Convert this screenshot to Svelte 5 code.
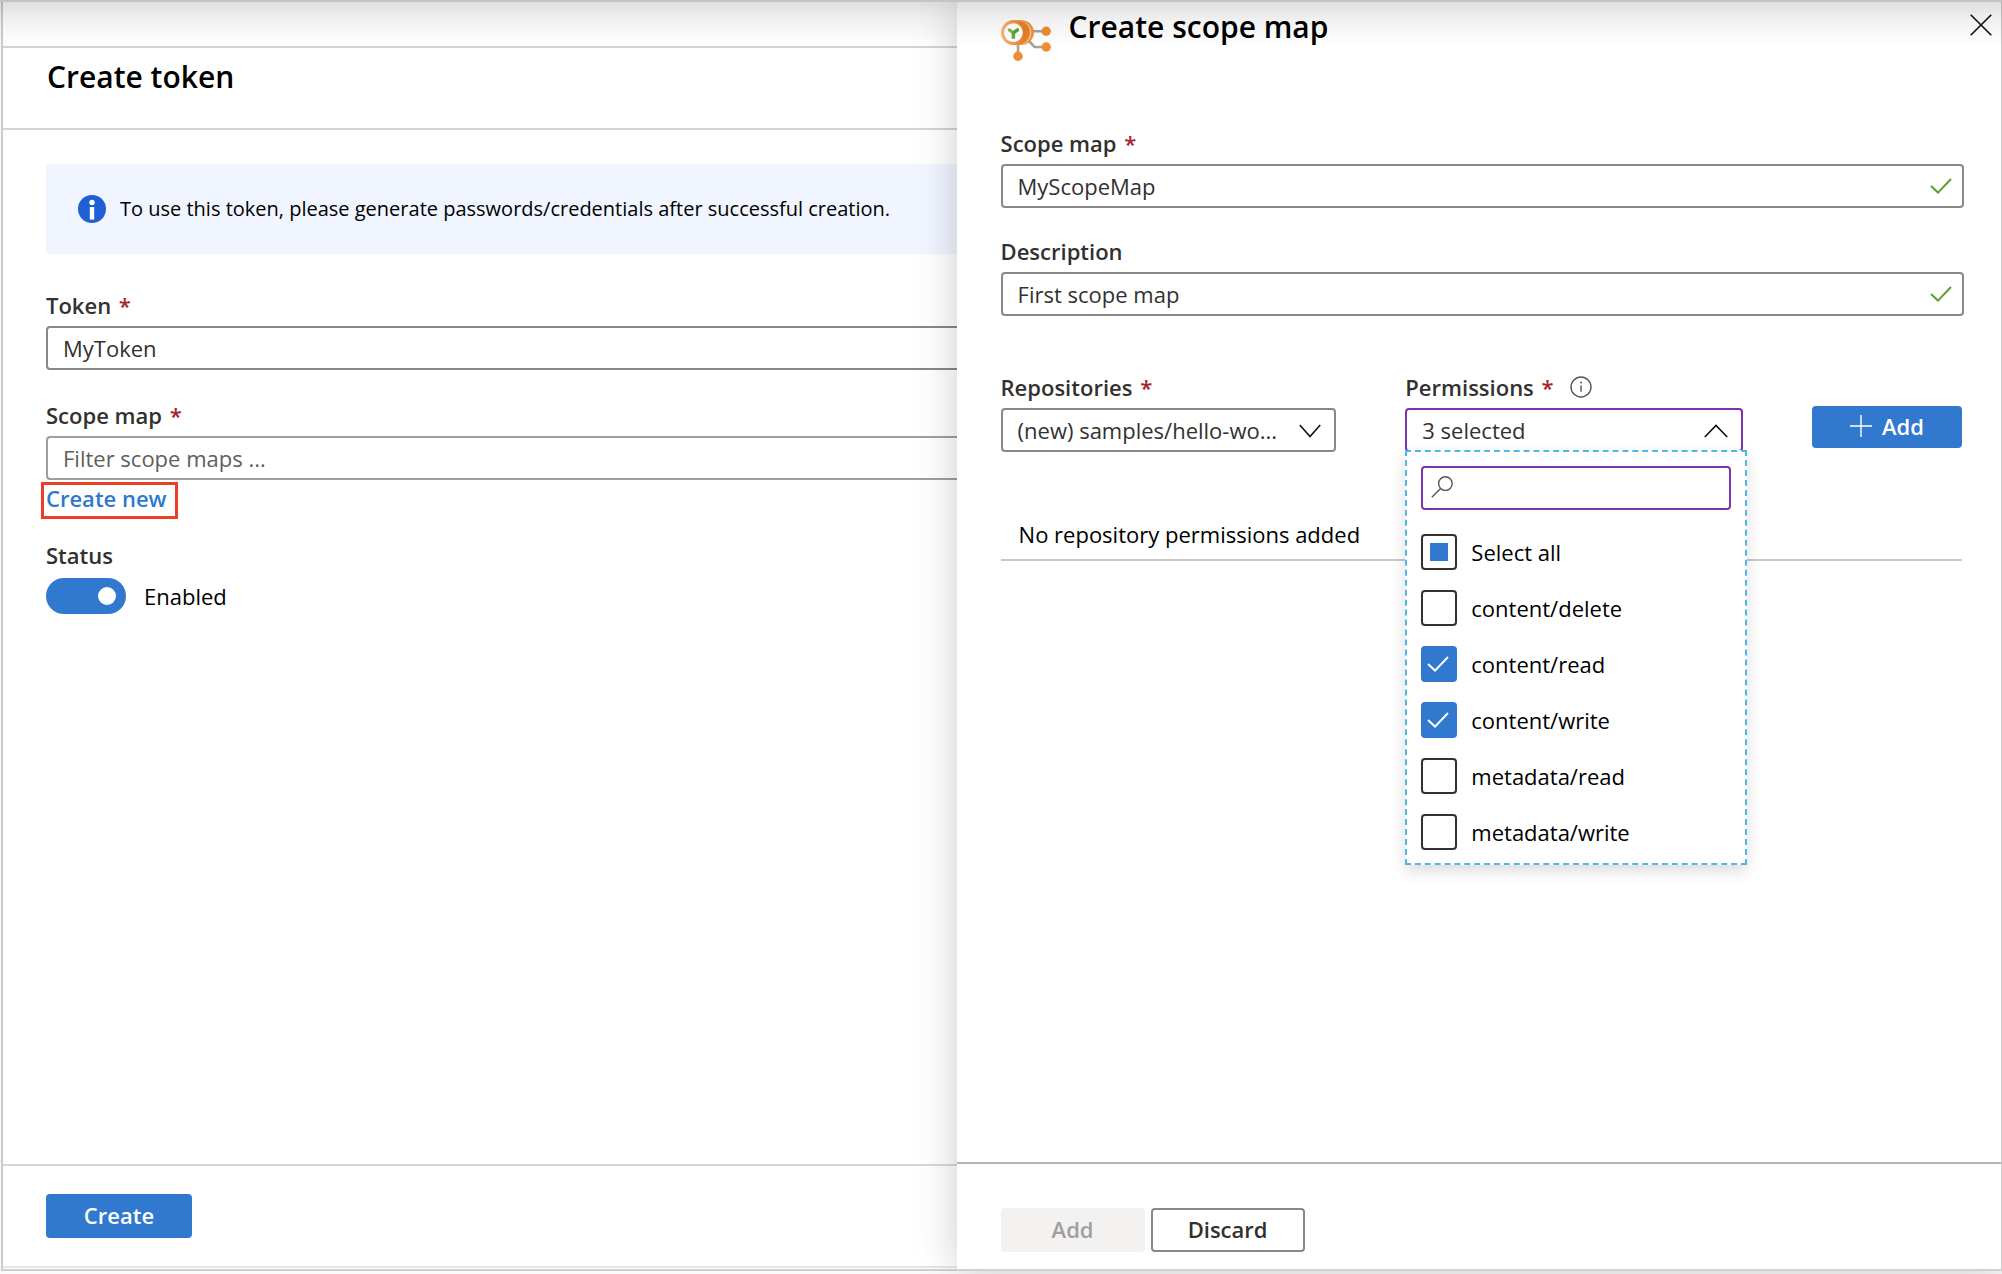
<script>
  let token = $state('MyToken');
  let scopeFilter = $state('');
  let enabled = $state(true);
  let mapName = $state('MyScopeMap');
  let description = $state('First scope map');
  let open = $state(true);
  let search = $state('');
  let permissions = $state([
    { name: 'content/delete', checked: false },
    { name: 'content/read', checked: true },
    { name: 'content/write', checked: true },
    { name: 'metadata/read', checked: false },
    { name: 'metadata/write', checked: false }
  ]);
  let allChecked = $state(false);
  let someChecked = $state(true);
  let summary = $state('3 selected');

  function refresh() {
    const count = permissions.filter((p) => p.checked).length;
    allChecked = count === permissions.length;
    someChecked = count > 0 && !allChecked;
    summary = `${count} selected`;
  }

  function toggleAll(event) {
    const value = event.currentTarget.checked;
    permissions.forEach((p) => (p.checked = value));
    refresh();
  }
</script>

<div class="page">
  <main class="blade token">
    <div class="strip"></div>
    <header class="token-header"><h1>Create token</h1></header>

    <div class="token-body">
      <div class="banner" role="note">
        <svg width="28" height="28" viewBox="0 0 28 28" aria-hidden="true">
          <circle cx="14" cy="14" r="14" fill="#1f5fd6" />
          <circle cx="14" cy="7.4" r="2.7" fill="#fff" />
          <rect x="11.8" y="12" width="4.4" height="12.6" fill="#fff" />
        </svg>
        <span>To use this token, please generate passwords/credentials after successful creation.</span>
      </div>

      <div class="field">
        <label for="token">Token <span class="req">*</span></label>
        <input id="token" class="box clipped" type="text" bind:value={token} />
      </div>

      <div class="field">
        <label for="scope-filter">Scope map <span class="req">*</span></label>
        <input id="scope-filter" class="box clipped light" type="text" placeholder="Filter scope maps ..." bind:value={scopeFilter} />
      </div>
      <a class="create-new" href="#create-scope-map">Create new</a>

      <div class="status">
        <span class="label" id="status-label">Status</span>
        <label class="switch">
          <input type="checkbox" role="switch" aria-labelledby="status-label" bind:checked={enabled} />
          <span>{enabled ? 'Enabled' : 'Disabled'}</span>
        </label>
      </div>
    </div>

    <footer class="token-footer"><button class="btn primary create" type="button">Create</button></footer>
  </main>

  <section class="blade scope" id="create-scope-map" aria-labelledby="scope-title">
    <header class="scope-header">
      <svg class="logo" width="50" height="42" viewBox="0 0 50 42" aria-hidden="true">
        <defs>
          <linearGradient id="ring" x1="0" y1="0" x2="1" y2="0">
            <stop offset="0" stop-color="#f8b878" />
            <stop offset="1" stop-color="#e87722" />
          </linearGradient>
        </defs>
        <path d="M32 11.2H43M28 21l5.5 6H43M17 24v9" fill="none" stroke="#a3a3a3" stroke-width="2.6" />
        <circle cx="20.5" cy="12.6" r="12.4" fill="#f0913a" />
        <circle cx="18" cy="12.6" r="12.2" fill="#fbd3a8" />
        <circle cx="16.6" cy="12.6" r="12.4" fill="#e9822c" />
        <circle cx="12.6" cy="12.6" r="12.6" fill="url(#ring)" />
        <circle cx="12.4" cy="12.6" r="9.4" fill="#fff" />
        <path d="M8.4 10L12.4 12.8L16.4 10" fill="none" stroke="#7fb84a" stroke-width="3.2" stroke-linecap="round" />
        <path d="M12.4 12v6.8" fill="none" stroke="#6aab38" stroke-width="3.6" />
        <path d="M13 12.4l3.4-2.4" fill="none" stroke="#5aa02c" stroke-width="3.2" stroke-linecap="round" />
        <circle cx="45.2" cy="11.2" r="4.7" fill="#f08c2e" />
        <circle cx="45.2" cy="27" r="4.7" fill="#f08c2e" />
        <circle cx="17" cy="36.2" r="4.7" fill="#f08c2e" />
      </svg>
      <h2 id="scope-title">Create scope map</h2>
      <button class="close" type="button" aria-label="Close">
        <svg width="22" height="22" viewBox="0 0 22 22" aria-hidden="true">
          <path d="M.7.7L21.3 21.3M21.3.7L.7 21.3" fill="none" stroke="#111" stroke-width="1.6" />
        </svg>
      </button>
    </header>

    <div class="scope-body">
      <div class="field">
        <label for="map-name">Scope map <span class="req">*</span></label>
        <div class="validated">
          <input id="map-name" class="box" type="text" bind:value={mapName} />
          <svg width="22" height="16" viewBox="0 0 22 16" aria-hidden="true"><path d="M1 8l7 6.6L21 1" /></svg>
        </div>
      </div>
      <div class="field">
        <label for="map-description">Description</label>
        <div class="validated">
          <input id="map-description" class="box" type="text" bind:value={description} />
          <svg width="22" height="16" viewBox="0 0 22 16" aria-hidden="true"><path d="M1 8l7 6.6L21 1" /></svg>
        </div>
      </div>

      <div class="picker">
        <div class="field">
          <label for="repository">Repositories <span class="req">*</span></label>
          <div class="dropdown">
            <select id="repository" class="box">
              <option>(new) samples/hello-wo...</option>
            </select>
            <svg width="22" height="14" viewBox="0 0 22 14" aria-hidden="true"><path d="M.8 1L11 12.6L21.2 1" /></svg>
          </div>
        </div>

        <div class="field">
          <div class="label-row">
            <label for="permissions">Permissions <span class="req">*</span></label>
            <svg width="22" height="22" viewBox="0 0 22 22" role="img" aria-label="About permissions">
              <circle cx="11" cy="11" r="10" fill="none" stroke="#555" stroke-width="1.4" />
              <circle cx="11" cy="6.6" r="1" fill="#555" />
              <path d="M11 9.4v6.4" stroke="#555" stroke-width="1.4" />
            </svg>
          </div>
          <div class="dropdown">
            <button id="permissions" class="box active" type="button" aria-haspopup="true" aria-expanded={open} onclick={() => (open = !open)}>{summary}</button>
            <svg width="24" height="14" viewBox="0 0 24 14" aria-hidden="true"><path d="M.8 13L12 1.4L23.2 13" /></svg>

            {#if open}
              <div class="menu">
                <div class="search">
                  <svg width="22" height="22" viewBox="0 0 22 22" aria-hidden="true">
                    <circle cx="14.4" cy="7.6" r="6.8" fill="none" stroke="#555" stroke-width="1.4" />
                    <path d="M9.6 12.4L.8 21.2" stroke="#555" stroke-width="1.4" />
                  </svg>
                  <input class="box active" type="search" aria-label="Filter permissions" bind:value={search} />
                </div>
                <label class="option">
                  <input type="checkbox" checked={allChecked} indeterminate={someChecked} onchange={toggleAll} />
                  <span>Select all</span>
                </label>
                {#each permissions.filter((p) => p.name.includes(search)) as permission (permission.name)}
                  <label class="option">
                    <input type="checkbox" bind:checked={permission.checked} onchange={refresh} />
                    <svg width="22" height="16" viewBox="0 0 22 16" aria-hidden="true"><path d="M1 8l7 6.6L21 1" /></svg>
                    <span>{permission.name}</span>
                  </label>
                {/each}
              </div>
            {/if}
          </div>
        </div>

        <button class="btn primary add" type="button">
          <svg width="22" height="22" viewBox="0 0 22 22" aria-hidden="true"><path d="M11 0v22M0 11h22" stroke="#fff" stroke-width="1.4" /></svg>
          Add
        </button>
      </div>

      <table>
        <tbody><tr><td>No repository permissions added</td></tr></tbody>
      </table>
    </div>

    <footer class="scope-footer">
      <button class="btn" type="button" disabled>Add</button>
      <button class="btn outline" type="button">Discard</button>
    </footer>
  </section>
</div>

<style>
  :global(body) {
    background: #fafafa;
  }

  .page,
  .page * {
    box-sizing: border-box;
  }

  .page {
    position: relative;
    display: flex;
    min-height: 100vh;
    padding-bottom: 3px;
    border-top: 2px solid #c4c4c4;
    overflow: hidden;
    color: #000;
    font: 22px/32px 'Open Sans', 'Segoe UI', sans-serif;
  }

  /* Shade cast by the bar above the blades */
  .page::after {
    content: '';
    position: absolute;
    inset: 0 0 auto;
    height: 44px;
    background: linear-gradient(rgba(0, 0, 0, 0.13), rgba(0, 0, 0, 0.05) 45%, rgba(0, 0, 0, 0));
    pointer-events: none;
  }

  .blade {
    display: flex;
    flex-direction: column;
    min-width: 0;
    background: #fff;
    border-bottom: 2px solid #d0d0d0;
  }

  .token {
    flex: 955 1 0;
    margin-left: 1px;
    border-left: 2px solid #cbcbcb;
  }

  .scope {
    position: relative;
    flex: 1046 1 0;
    border-right: 1px solid #cbcbcb;
    box-shadow: 0 0 40px rgba(0, 0, 0, 0.2);
  }

  h1,
  h2 {
    margin: 0;
    font-size: 30px;
    font-weight: 600;
    line-height: 40px;
  }

  .strip {
    height: 44px;
  }

  .token-header {
    padding: 9px 44px 31px;
    border-top: 2px solid #d3d3d3;
    border-bottom: 2px solid #d3d3d3;
  }

  .token-body {
    flex: 1;
    padding: 34px 0 34px 43px;
  }

  .banner {
    display: flex;
    align-items: center;
    gap: 14px;
    min-height: 90px;
    margin-bottom: 36px;
    padding: 0 32px;
    border-radius: 4px 0 0 4px;
    background: #f0f5ff;
    font-size: 20px;
  }

  .banner svg {
    flex: none;
  }

  .field {
    display: flex;
    flex-direction: column;
    gap: 6px;
    min-width: 0;
  }

  .token-body .field + .field {
    margin-top: 30px;
  }

  .field label,
  .label {
    color: #323130;
    font-weight: 600;
    line-height: 30px;
  }

  .req {
    margin-left: 2px;
    color: #a4262c;
  }

  .box {
    display: block;
    width: 100%;
    height: 44px;
    margin: 0;
    padding: 0 15px;
    border: 2px solid #8a8886;
    border-radius: 4px;
    outline: none;
    background: #fff;
    color: #323130;
    font: inherit;
    text-align: left;
    appearance: none;
  }

  .box.clipped {
    border-right: 0;
    border-radius: 4px 0 0 4px;
  }

  .box.light {
    border-color: #a19f9d;
  }

  .box.active {
    border-color: #8031a7;
  }

  .box::placeholder {
    color: #605e5c;
    opacity: 1;
  }

  .create-new {
    display: block;
    width: fit-content;
    margin-top: 7px;
    padding: 0 6px 4px 0;
    outline: 3px solid #ea4025;
    outline-offset: 2px;
    color: #2f78d0;
    font-weight: 600;
    line-height: 23px;
    text-decoration: none;
  }

  .status {
    display: flex;
    flex-direction: column;
    gap: 8px;
    margin-top: 26px;
  }

  .switch {
    display: flex;
    align-items: center;
    gap: 18px;
    width: fit-content;
  }

  .switch input {
    display: flex;
    align-items: center;
    width: 80px;
    height: 36px;
    margin: 0;
    padding: 0 10px;
    border-radius: 18px;
    background: #8a8886;
    appearance: none;
  }

  .switch input::before {
    content: '';
    width: 18px;
    height: 18px;
    border-radius: 50%;
    background: #fff;
  }

  .switch input:checked {
    justify-content: flex-end;
    background: #3178cf;
  }

  .btn {
    display: flex;
    align-items: center;
    justify-content: center;
    gap: 10px;
    height: 44px;
    min-width: 144px;
    padding: 0 28px 2px;
    border: 0;
    border-radius: 4px;
    background: #f3f2f1;
    color: #323130;
    font: inherit;
    font-weight: 600;
  }

  .btn:disabled {
    color: #a19f9d;
  }

  .btn.primary {
    background: #3178cf;
    color: #fff;
  }

  .btn.outline {
    min-width: 154px;
    border: 2px solid #8a8886;
    background: #fff;
  }

  .btn.create {
    min-width: 146px;
  }

  .token-footer {
    position: relative;
    padding: 28px 43px 31px;
    border-top: 2px solid #d8d8d8;
  }

  .token-footer::after {
    content: '';
    position: absolute;
    inset: auto 0 1px;
    height: 2px;
    background: #e6e6e6;
  }

  .scope-header {
    display: flex;
    align-items: flex-start;
    padding: 5px 9px 0 44px;
  }

  .logo {
    margin: 13px 18px 0 0;
  }

  .close {
    display: flex;
    margin: 7px 0 0 auto;
    padding: 0;
    border: 0;
    background: none;
  }

  .scope-body {
    display: flex;
    flex: 1;
    flex-direction: column;
    gap: 28px;
    padding: 66px 37px 44px 44px;
  }

  .validated,
  .dropdown {
    position: relative;
  }

  .validated > svg,
  .dropdown > svg {
    position: absolute;
    top: 14px;
    right: 12px;
    fill: none;
    stroke: #5f9f2e;
    stroke-width: 2;
    pointer-events: none;
  }

  .dropdown > svg {
    top: 16px;
    right: 15px;
    stroke: #111;
    stroke-width: 1.6;
  }

  .picker {
    display: grid;
    grid-template-columns: 336fr 338fr 150fr;
    column-gap: 69px;
    align-items: end;
    margin-top: 28px;
    padding-right: 2px;
  }

  .label-row {
    display: flex;
    align-items: center;
    gap: 16px;
  }

  .btn.add {
    height: 42px;
    min-width: 0;
    margin-bottom: 4px;
  }

  .menu {
    position: absolute;
    top: calc(100% - 2px);
    left: 0;
    right: -4px;
    padding: 14px 14px 3px;
    border: 2px dashed #4db8ec;
    background: #fff;
    box-shadow: 0 6px 14px rgba(0, 0, 0, 0.14);
  }

  .search {
    position: relative;
    margin-bottom: 14px;
  }

  .search svg {
    position: absolute;
    top: 10px;
    left: 10px;
  }

  .search .box {
    padding-left: 44px;
  }

  .option {
    display: flex;
    align-items: center;
    position: relative;
    gap: 14px;
    height: 56px;
  }

  .field .option {
    color: #000;
    font-weight: 400;
  }

  .option input {
    flex: none;
    width: 36px;
    height: 36px;
    margin: 0;
    border: 2px solid #323130;
    border-radius: 4px;
    background: #fff;
    appearance: none;
  }

  .option input:indeterminate {
    padding: 7px;
    background: #3178cf content-box;
  }

  .option input:checked {
    border-color: #3178cf;
    background: #3178cf;
  }

  .option svg {
    position: absolute;
    left: 6px;
    fill: none;
    stroke: #fff;
    stroke-width: 2;
  }

  table {
    width: calc(100% - 2px);
    margin-top: 28px;
    border-collapse: collapse;
  }

  td {
    height: 52px;
    padding: 0 18px;
    border-bottom: 2px solid #c8c8c8;
  }

  .scope-footer {
    display: flex;
    gap: 6px;
    padding: 44px 44px 17px;
    border-top: 2px solid #b5b5b5;
  }
</style>
